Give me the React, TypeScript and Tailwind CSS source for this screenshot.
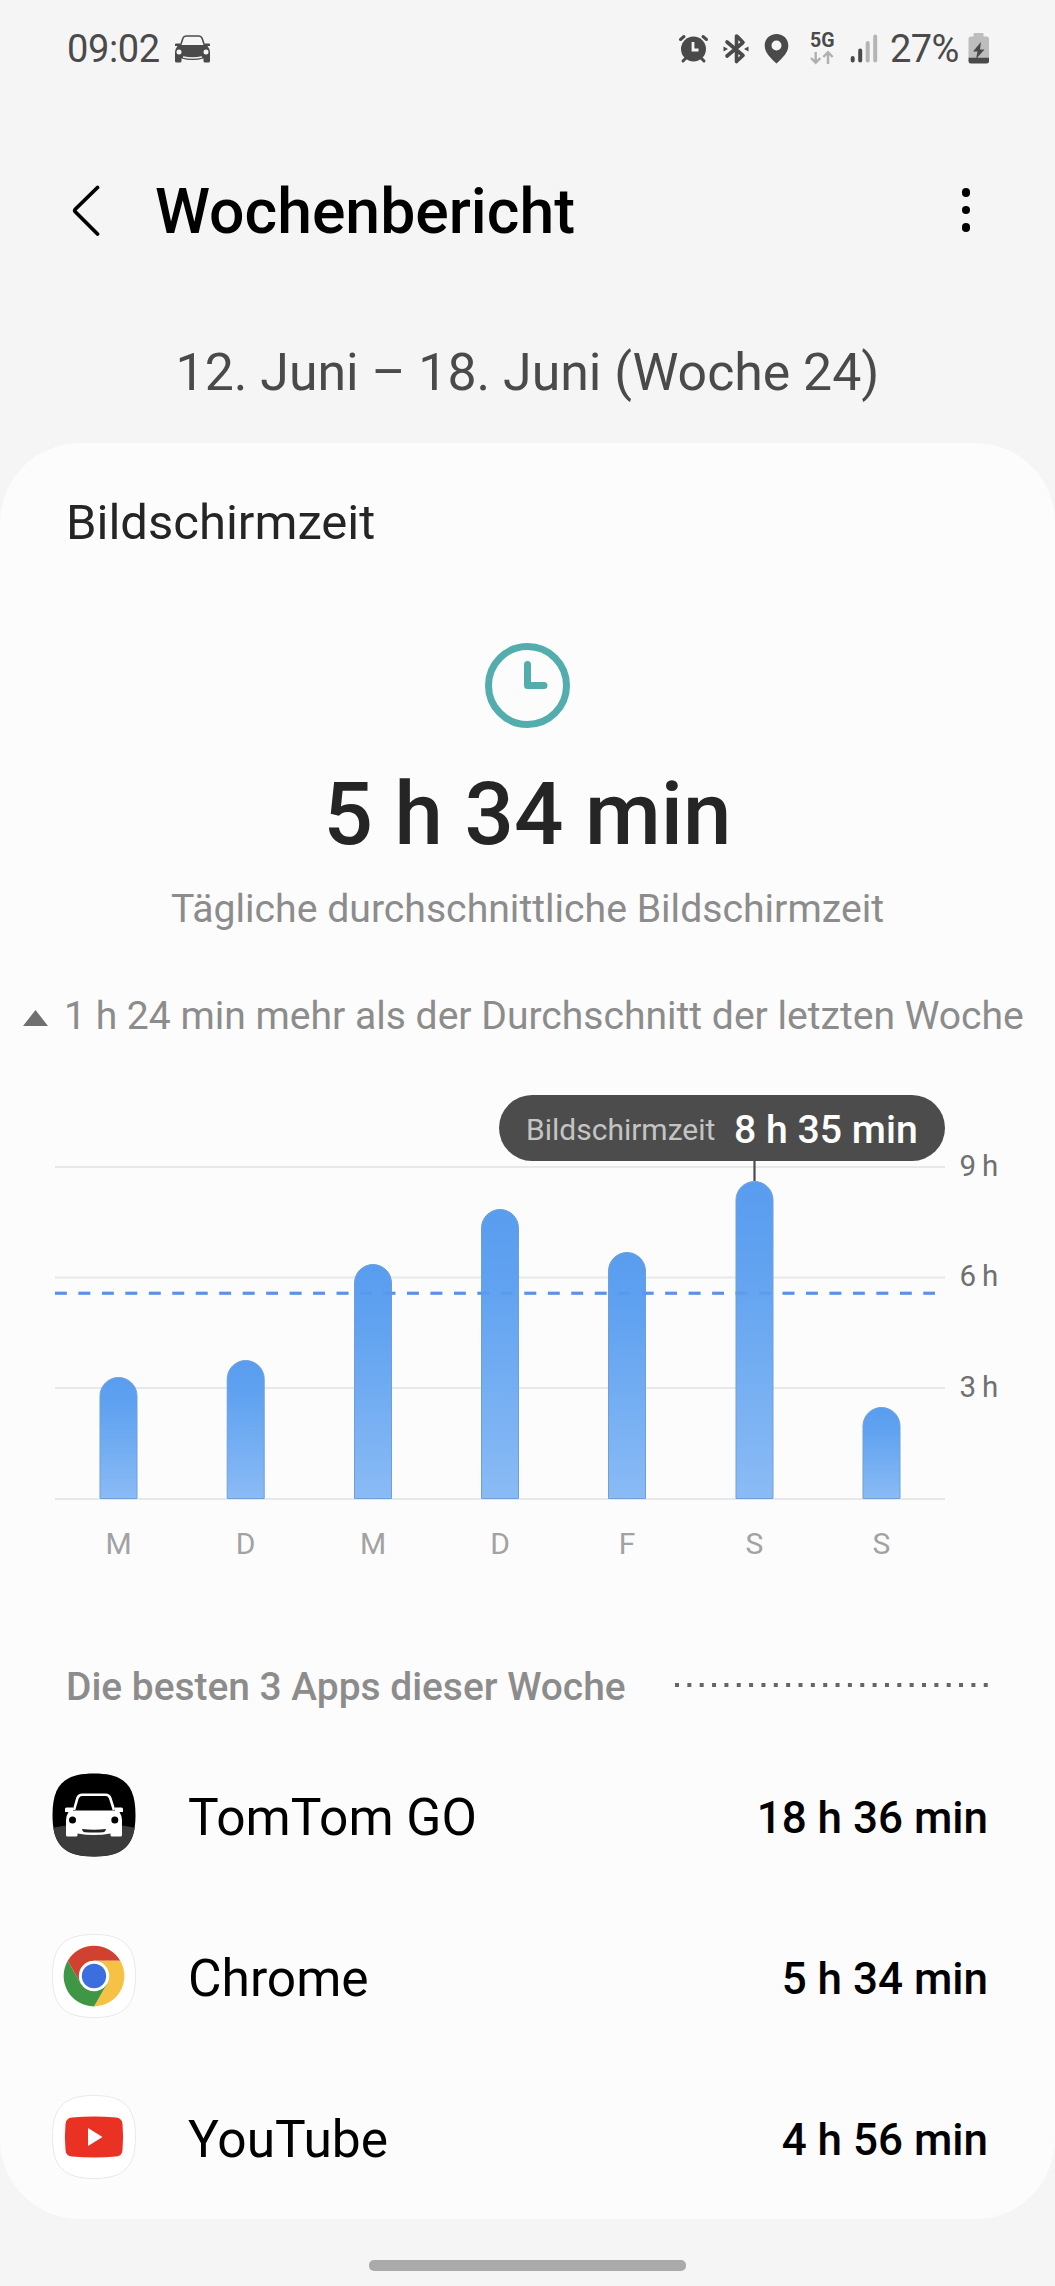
const days = [
    { label: "M", x: 118.5, top: 1377 },
    { label: "D", x: 245.7, top: 1360 },
    { label: "M", x: 373, top: 1264 },
    { label: "D", x: 500, top: 1209 },
    { label: "F", x: 627, top: 1252 },
    { label: "S", x: 754.5, top: 1181 },
    { label: "S", x: 881.5, top: 1407 },
];

const gridLines = [
    { y: 1167, label: "9 h" },
    { y: 1277.5, label: "6 h" },
    { y: 1388, label: "3 h" },
    { y: 1499, label: "" },
];

const squircle =
    "M42 .5C72 .5 83.5 12 83.5 42S72 83.5 42 83.5 .5 72 .5 42 12 .5 42 .5Z";

function StatusCar() {
    return (
        <svg className="h-[28px] w-[35px]" viewBox="0 0 35 28">
            <path
                d="M5.5 10.5 8 3Q8.8 1 11 1h13q2.200 0 3 2l2.500 7.500"
                fill="none"
                stroke="#4a4a4a"
                strokeWidth="1.600"
            />
            <path
                d="M0 9.500q0-1 1-1h4v1.500h25V8.500h4q1 0 1 1v1.500h-2.500Q35 14 35 17v9q0 1.500-1.500 1.500H30q-1.500 0-1.500-1.500v-2.500q-11 3-22 0V26q0 1.500-1.500 1.500H1.500Q0 27.500 0 26v-9q0-3 2.500-6H0z"
                fill="#4a4a4a"
            />
            <circle cx="4" cy="17" r="2.500" fill="#f5f5f5" />
            <circle cx="31" cy="17" r="2.500" fill="#f5f5f5" />
            <path
                d="M8 22q9.500 2 19 0"
                fill="none"
                stroke="#f5f5f5"
                strokeWidth="1.500"
            />
        </svg>
    );
}

function StatusIcons() {
    return (
        <svg className="h-[97px] w-[174px]" viewBox="676 0 174 97">
            {/* alarm */}
            <g stroke="#4a4a4a" strokeWidth="3" strokeLinecap="round">
                <path d="M680.500 39.500 684 36.500M706.500 39.500 703 36.500M683 61l3-3M704 61l-3-3" />
            </g>
            <circle cx="693.500" cy="49" r="12.500" fill="#4a4a4a" />
            <path
                d="M693 42v8h5.500"
                fill="none"
                stroke="#f5f5f5"
                strokeWidth="2.800"
            />
            {/* bluetooth */}
            <path
                d="M727 42 743 55.500Q738 60 736.500 61.500V36Q738 37 743 42.500L727 56"
                fill="none"
                stroke="#4a4a4a"
                strokeWidth="3.600"
                strokeLinecap="round"
                strokeLinejoin="round"
            />
            <path
                d="m723.500 46.500 4.500 2.500-4.500 2.500zM748.500 46.500 744 49l4.500 2.500z"
                fill="#4a4a4a"
            />
            {/* location */}
            <path
                d="M776.500 34c-6.800 0-11.800 5-11.800 11.500 0 7.500 6 12.500 11.800 18 5.800-5.500 11.800-10.500 11.800-18C788.300 39 783.300 34 776.500 34Zm0 6.500a5 5 0 1 1 0 10 5 5 0 0 1 0-10Z"
                fill="#4a4a4a"
            />
            <text
                x="822.300"
                y="46.500"
                textAnchor="middle"
                fontSize="19.500"
                fontWeight="700"
                fill="#4a4a4a"
            >
                5G
            </text>
            <path
                d="M815.700 52v10.500M811 58l4.700 4.700L820.400 58M828 64V52.500M823.300 57l4.700-4.700 4.700 4.700"
                fill="none"
                stroke="#b0b0b0"
                strokeWidth="2.400"
            />
        </svg>
    );
}

function Signal() {
    return (
        <svg className="h-[97px] w-[28px]" viewBox="850 0 28 97">
            <g strokeWidth="4" strokeLinecap="round">
                <path d="M852.700 58v2.500M860.200 50.500v10" stroke="#4a4a4a" />
                <path d="M867.700 43v17.500M875.200 36.500v24" stroke="#b5b5b5" />
            </g>
        </svg>
    );
}

function Battery() {
    return (
        <svg className="h-[31px] w-[22px]" viewBox="0 0 22 31">
            <path
                d="M6.500 0h8q1 0 1 1v2.500h3q2.500 0 2.500 2.500v18H.5V6Q.5 3.500 3 3.500h2.500V1q0-1 1-1Z"
                fill="#bdbdbd"
            />
            <path
                d="M.5 24.500H21V28q0 2.500-2.500 2.500H3Q.5 30.500.5 28Z"
                fill="#4a4a4a"
            />
            <path d="M13 9 5 18.500h4.500L8 26l8.500-9.500H12Z" fill="#4a4a4a" />
        </svg>
    );
}

function StatusBar() {
    return (
        <div className="flex h-[97px] items-center text-[38px] leading-none text-[#4a4a4a]">
            <span className="ml-[67px] w-[108px] tracking-[-0.4px]">09:02</span>
            <StatusCar />
            <div className="ml-auto flex items-center pr-[65px]">
                <StatusIcons />
                <Signal />
                <span className="ml-[12px] w-[78px] tracking-[-0.6px]">27%</span>
                <Battery />
            </div>
        </div>
    );
}

function TitleBar() {
    return (
        <header className="flex h-[231px] items-center">
            <svg className="ml-[66px] h-[56px] w-[40px]" viewBox="66 184.500 40 56">
                <path
                    d="M97.500 187 75.500 208.500q-1.500 1.500 0 3L97.500 233.500"
                    fill="none"
                    stroke="#000"
                    strokeWidth="3.800"
                    strokeLinecap="round"
                />
            </svg>
            <h1 className="ml-[49px] text-[62.500px] leading-none font-medium">
                Wochenbericht
            </h1>
            <div className="mt-[-5px] mr-[85px] ml-auto flex flex-col gap-[9px]">
                <i className="size-[8.500px] rounded-full bg-black" />
                <i className="size-[8.500px] rounded-full bg-black" />
                <i className="size-[8.500px] rounded-full bg-black" />
            </div>
        </header>
    );
}

function Chart() {
    return (
        <div className="relative h-[557px]">
            <svg className="h-[557px] w-full" viewBox="0 1083 1055 557">
                <defs>
                    <linearGradient id="bar" x1="0" y1="0" x2="0" y2="1">
                        <stop offset="0" stopColor="#599df0" />
                        <stop offset="0.250" stopColor="#60a2f0" />
                        <stop offset="1" stopColor="#8abbf5" />
                    </linearGradient>
                </defs>
                {gridLines.map((line) => (
                    <g key={line.y}>
                        <path
                            d={`M55 ${line.y}H945`}
                            stroke="#e8e8e8"
                            strokeWidth="1.800"
                        />
                        <text
                            x="959.500"
                            y={line.y + 8.5}
                            fontSize="29.500"
                            wordSpacing="-1.500"
                            fill="#707070"
                        >
                            {line.label}
                        </text>
                    </g>
                ))}
                <path
                    d="M55 1293.300H935"
                    stroke="#6292e2"
                    strokeWidth="3"
                    strokeDasharray="11.800 11.670"
                />
                {days.map((day) => (
                    <g key={day.x}>
                        <path
                            d={`M${day.x - 18.5} 1498.500V${day.top + 19}a18.500 18.500 0 0 1 37 0V1498.500Z`}
                            fill="url(#bar)"
                            stroke="#6f9fd8"
                            strokeWidth="1"
                        />
                        <text
                            x={day.x}
                            y="1554"
                            textAnchor="middle"
                            fontSize="30"
                            fill="#a2a2a2"
                        >
                            {day.label}
                        </text>
                    </g>
                ))}
                {/* average line showing faintly through the bars */}
                <path
                    d="M55 1293.300H935"
                    stroke="#5590ea"
                    strokeOpacity="0.500"
                    strokeWidth="3"
                    strokeDasharray="11.800 11.670"
                />
                <path d="M754.500 1160V1181" stroke="#4a4a4a" strokeWidth="2.200" />
            </svg>
            <div className="absolute top-[12px] left-[499px] flex h-[66px] w-[446px] items-center rounded-full bg-[#4c4c4c] pl-[27px] leading-none">
                <span className="mt-[3px] w-[208px] text-[30px] text-[#c4c4c4]">
                    Bildschirmzeit
                </span>
                <span className="mt-[5px] text-[39.200px] font-medium whitespace-nowrap text-white">
                    8 h 35 min
                </span>
            </div>
        </div>
    );
}

function TomTomIcon() {
    return (
        <svg className="size-[84px]" viewBox="0 0 84 84">
            <clipPath id="tile">
                <path d={squircle} />
            </clipPath>
            <g clipPath="url(#tile)">
                <path d="M0 0h84v84H0z" fill="#000" />
                <path d="M0 55q42-9 84 0v29H0z" fill="#3b3b3b" />
            </g>
            <path
                d="M22 37 25.500 25Q26.700 21.700 30.500 21.700h23q3.500 0 4.700 3.300L62 37"
                fill="none"
                stroke="#fff"
                strokeWidth="2.600"
            />
            <path
                d="M13 36q0-1.500 1.500-1.500h6.500V37.500h42V34.500h6.500q1.500 0 1.500 1.500v3h-3.500Q70 43 70 47v15q0 1.500-1.500 1.500H60q-1.500 0-1.500-1.500v-1.500q-16.500 3-33 0V62q0 1.500-1.500 1.500h-8.500Q14 63.500 14 62V47q0-4 2.500-8H13z"
                fill="#fff"
            />
            <circle cx="20.500" cy="47" r="3.500" fill="#000" />
            <circle cx="62.800" cy="47" r="3.500" fill="#000" />
            <path d="M30 56q12 1.500 24 0-.5 3-3 3.200-9 .6-18 0-2.500-.2-3-3.200z" fill="#222" />
        </svg>
    );
}

function ChromeIcon() {
    return (
        <svg className="size-[84px]" viewBox="0 0 84 84">
            <path d={squircle} fill="#fff" stroke="#e9e9e9" />
            <g transform="translate(42 42)">
                <path
                    d="M-26.300-15.200A30.400 30.400 0 0 1 26.300-15.200H0L-13.200 7.600Z"
                    fill="#d0412f"
                />
                <path
                    d="M26.300-15.200A30.400 30.400 0 0 1 0 30.400L13.200 7.600 0-15.200Z"
                    fill="#f5c243"
                />
                <path
                    d="M0 30.400A30.400 30.400 0 0 1-26.300-15.200L-13.200 7.600H13.200Z"
                    fill="#3f9644"
                />
                <circle r="15.200" fill="#fff" />
                <circle r="12.200" fill="#3b6fdf" />
            </g>
        </svg>
    );
}

function YouTubeIcon() {
    return (
        <svg className="size-[84px]" viewBox="0 0 84 84">
            <path d={squircle} fill="#fff" stroke="#e9e9e9" />
            <path
                d="M20 22.500q22-2 44 0 6 .5 6.500 6.500 1.200 13 0 26-.5 6-6.500 6.500-22 2-44 0-6-.5-6.500-6.500-1.200-13 0-26 .5-6 6.500-6.500Z"
                fill="#e93223"
            />
            <path d="M36 33v18l14.500-9Z" fill="#fff" />
        </svg>
    );
}

const apps = [
    { name: "TomTom GO", time: "18 h 36 min", icon: <TomTomIcon /> },
    { name: "Chrome", time: "5 h 34 min", icon: <ChromeIcon /> },
    { name: "YouTube", time: "4 h 56 min", icon: <YouTubeIcon /> },
];

function App() {
    return (
        <main className="h-[2286px] w-[1055px] overflow-hidden bg-[#f5f5f5] font-[Roboto,sans-serif] text-black">
            <StatusBar />
            <TitleBar />
            <p className="h-[115px] text-center text-[51.800px] leading-[90px] text-[#4a4a4a]">
                12. Juni – 18. Juni (Woche 24)
            </p>

            <section className="h-[1776px] rounded-[80px] bg-[#fcfcfc]">
                <h2 className="h-[159px] pl-[66px] text-[49px] leading-[159px] text-[#252525]">
                    Bildschirmzeit
                </h2>
                <svg
                    className="mx-auto mt-[41px] block size-[85px]"
                    viewBox="0 0 85 85"
                    fill="none"
                    stroke="#53adad"
                    strokeWidth="7"
                    strokeLinecap="round"
                    strokeLinejoin="round"
                >
                    <circle cx="42.500" cy="42.500" r="39" />
                    <path d="M42.500 21.500V42.500H59" />
                </svg>
                <p className="mt-[33px] text-center text-[87px] leading-[107px] font-medium text-[#252525]">
                    5 h 34 min
                </p>
                <p className="text-center text-[39.200px] leading-[82px] text-[#8c8c8c]">
                    Tägliche durchschnittliche Bildschirmzeit
                </p>
                <div className="flex h-[133px] items-center pl-[23px] text-[39.100px] leading-none whitespace-nowrap text-[#8c8c8c]">
                    <svg className="mt-[2px] h-[16px] w-[25px]" viewBox="0 0 25 16">
                        <path d="M12.500 0 25 16H0Z" fill="#6f6f6f" />
                    </svg>
                    <span className="ml-[16px]">
                        1 h 24 min mehr als der Durchschnitt der letzten Woche
                    </span>
                </div>

                <Chart />

                <div className="flex h-[94px] items-center pl-[66px]">
                    <h3 className="w-[609px] text-[38.900px] leading-none font-medium text-[#8c8c8c]">
                        Die besten 3 Apps dieser Woche
                    </h3>
                    <svg className="mt-[-4px] h-[4px] w-[313px]" viewBox="0 0 313 4">
                        <path
                            d="M0 2H313"
                            stroke="#666"
                            strokeWidth="4"
                            strokeDasharray="4 8.350"
                        />
                    </svg>
                </div>
                <ul>
                    {apps.map((app) => (
                        <li
                            key={app.name}
                            className="flex h-[161px] items-center pr-[67px] pl-[52px]"
                        >
                            {app.icon}
                            <span className="mt-[7px] ml-[52px] text-[51.500px] leading-none">
                                {app.name}
                            </span>
                            <span className="mt-[6px] ml-auto text-[44px] leading-none font-medium">
                                {app.time}
                            </span>
                        </li>
                    ))}
                </ul>
            </section>

            <div className="mx-auto mt-[41px] h-[11px] w-[317px] rounded-[5px] bg-[#aaa]" />
        </main>
    );
}

export default App;
